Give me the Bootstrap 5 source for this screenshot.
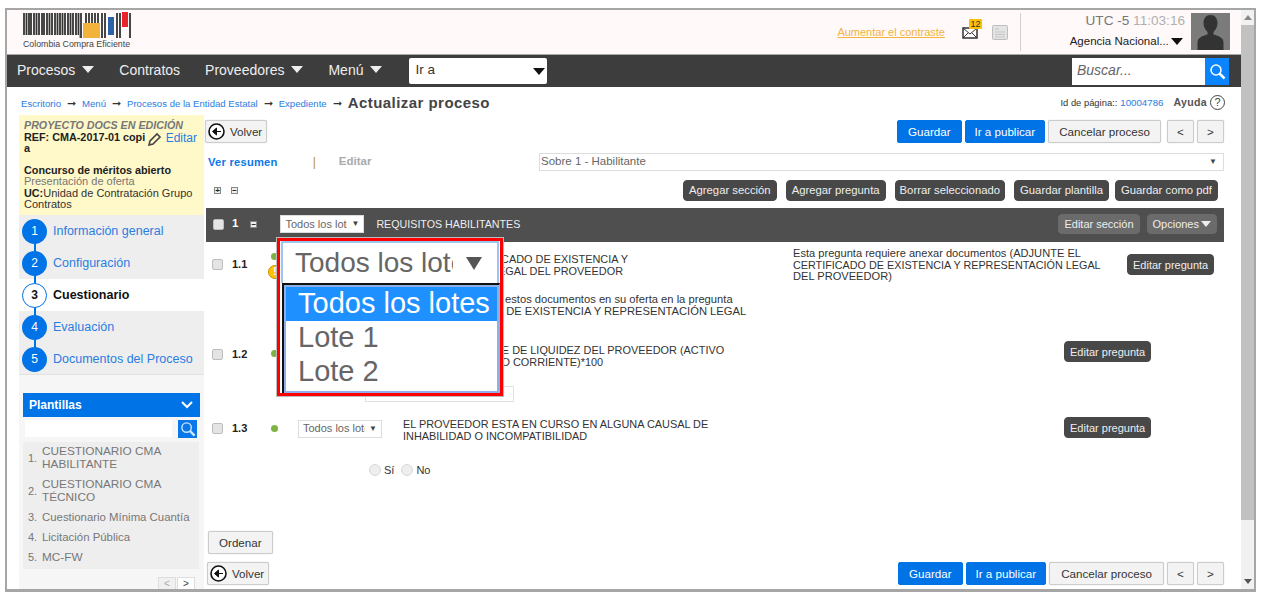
<!DOCTYPE html>
<html lang="es">
<head>
<meta charset="utf-8">
<title>Actualizar proceso</title>
<link href="https://cdn.jsdelivr.net/npm/bootstrap@5.3.0/dist/css/bootstrap.min.css" rel="stylesheet">
<style>
html,body{height:100%;overflow:hidden;background:#fff}
body{font-family:"Liberation Sans",Arial,sans-serif;font-size:12px;color:#333;padding:8px 6px 5px 5px}
.frame{height:584px;border:solid #a6a6a6;border-width:2px 2px 3px 2px;display:flex;overflow:hidden;background:#fff}
.page{width:1234px;flex:none;display:flex;flex-direction:column}
.sbar{flex:1;background:#f1f1f1;display:flex;flex-direction:column;align-items:center}
.sb-up,.sb-dn{height:15px;display:flex;align-items:center;color:#777}
.sb-thumb{height:495px;width:100%;background:#c1c1c1}
.tri{width:0;height:0;border-left:4px solid transparent;border-right:4px solid transparent}
.tri-u{border-bottom:5px solid #888}
.tri-d{border-top:5px solid #555}
.head{height:45px;background:#fff9f9;border-bottom:1px solid #a9a9a9;display:flex;align-items:stretch;padding:3px 11px 0 16px}
.logo{margin-top:-1px;flex:none}
.logo-txt{font-size:8.8px;fill:#444;font-family:"Liberation Sans",Arial,sans-serif}
.contrast{color:#f4b23e;font-size:11px;text-decoration:underline;margin-right:17px;margin-top:11px}
.ico-mail{position:relative;width:22px;height:22px;margin-top:6px}
.mailsvg{position:absolute;left:0;top:8px}
.ico-badge{position:absolute;left:7px;top:0;width:13px;height:10px;background:#fdc100;font-size:9px;line-height:10px;color:#333;text-align:center;border-radius:1px}
.docsvg{margin:12px 0 0 8px}
.hdiv{width:1px;background:#d0d0d0;margin:0 0 3px 12px}
.hinfo{width:170px;text-align:right;padding-right:6px;flex:none}
.clock{font-size:13.6px;color:#777;line-height:16px}
.clock span{color:#b0b0b0}
.agency{font-size:11.5px;color:#222;margin-top:5px;line-height:14px;padding-right:2px}
.crt-b{display:inline-block;width:0;height:0;border-left:6px solid transparent;border-right:6px solid transparent;border-top:7px solid #111;margin-left:1px}
.agency .crt-b{margin-left:-1px}
.crt-w{display:inline-block;width:0;height:0;border-left:6px solid transparent;border-right:6px solid transparent;border-top:7px solid #eee;margin-left:7px;vertical-align:2px}
.avatar{width:39px;height:37px;background:#7b7b7b;flex:none}
.mainnav{height:32px;background:#3d3d3d;display:flex;align-items:center;padding:0 12px 0 10px;flex:none}
.nv{color:#eee;font-size:14px;margin-right:25px;white-space:nowrap;padding-bottom:2px}
.nv-go{width:138px;height:26px;background:#fff;border-radius:2px;margin-left:2px;color:#333;font-size:13.5px;display:flex;align-items:center;justify-content:space-between;padding:0 2px 2px 6px}
.nv-go .crt-b{margin-top:3px}
.nv-search{margin-left:auto;display:flex;height:27px;width:157px}
.nv-in{flex:1;background:#fff;color:#666;font-style:italic;font-size:14px;padding:2px 5px}
.nv-btn{width:24px;background:#0a84ff;display:flex;align-items:center;justify-content:center}
.crumb{height:28px;flex:none;display:flex;align-items:center;padding:4px 16px 0 14px}
.crumb a{font-size:9.6px;color:#2a7de1;text-decoration:none;padding-top:2px}
.arr{font-size:11px;color:#333;margin:0 6px;line-height:1}
.crumb-now{font-size:15px;font-weight:700;color:#444;letter-spacing:.03em}
.pageid{margin-left:auto;font-size:9.4px;color:#333;display:flex;align-items:center}
.pageid a{color:#2a7de1;margin-left:3px;font-size:9.7px;padding-top:0}
.pageid b{font-size:10.6px;color:#555;margin-left:10px;letter-spacing:.03em}
.qm{width:15px;height:15px;border:1.5px solid #444;border-radius:50%;font-size:11px;line-height:12px;text-align:center;margin-left:3px;color:#444}
.body-wrap{flex:1;display:flex;min-height:0;padding-left:12px}
.side{width:185px;flex:none;background:#f6f6f6;display:flex;flex-direction:column}
.yell{height:100px;background:#fff8c9;padding:5px 7px 4px 5px;line-height:11.5px;font-size:11px;flex:none}
.yell i{color:#777;font-weight:700;font-size:10.7px}
.yell b{color:#222;font-size:10.8px}
.yell .gr{color:#777}
.ed{color:#2a7de1;font-size:12px;white-space:nowrap}
.ref{display:flex;justify-content:space-between}
.ygap{height:10px}
.steps{background:#eee;flex:none;height:160px;border-bottom:1px solid #e2e2e2}
.stp{height:32px;display:flex;align-items:center;padding-left:3px;position:relative;font-size:12.5px;color:#2a7de1}
.stp.on{background:#fff;color:#111;font-weight:700}
.stp+.stp::before{content:"";position:absolute;left:15px;top:-6px;width:1.5px;height:12px;background:#0073e6}
.dotn{width:25px;height:25px;border-radius:50%;background:#0073e6;color:#fff;display:flex;align-items:center;justify-content:center;margin-right:6px;font-size:12px;position:relative;z-index:1;font-weight:400}
.on .dotn{background:#fff;border:1.5px solid #0073e6;color:#111;font-weight:700}
.plant{margin:18px 4px 0 4px;height:24px;background:#0073e6;color:#fff;font-weight:700;display:flex;align-items:center;justify-content:space-between;padding:0 7px 0 6px;font-size:12px;flex:none}
.psearch{display:flex;justify-content:space-between;padding:3px 7px 0 6px;flex:none}
.psearch span{width:147px;height:17px;background:#fff;display:block}
.psearch em{width:19px;height:18px;background:#0a78e8;display:flex;align-items:center;justify-content:center}
.plist{margin:4px 0 0 4px;width:176px;background:#eee;color:#777;padding:0 0 1px 5px;font-size:11.8px;line-height:13px;flex:none;list-style:none}
.plist li{display:flex;align-items:center;padding:3px 0 4px}
.plist u{text-decoration:none;width:14px;flex:none;font-size:11px}
.plist .lw{font-size:11.4px}
.ppg{display:flex;justify-content:flex-end;gap:1px;padding:8px 9px 0 0;flex:none}
.ppg span{width:18px;height:14px;border:1px solid #ddd;background:#fff;font-size:10px;text-align:center;line-height:12px;color:#444}
.ppg span:first-child{background:#f0f0f0;color:#aaa}
.cnt{flex:1;min-width:0;display:flex;flex-direction:column;padding:0 17px 0 1px;position:relative}
.tbar{display:flex;align-items:center;justify-content:space-between;flex:none}
.tbar.first{margin-top:5px}
.btn.b-g{background:#f3f3f3;border:1px solid #ccc;color:#333;font-size:11.6px;padding:0 10px;height:23px;line-height:20px;border-radius:2px;box-shadow:0 0 1px #bbb}
.btn.b-p{background:#0073e6;border:1px solid #0073e6;color:#fff;font-size:11.6px;padding:0 10px;height:23px;line-height:20px;border-radius:2px}
.btn.b-p.pub{padding:0 9px}
.btn.b-g.wide{padding:0 11px}
.btn.b-d{background:#484848;border:1px solid #484848;color:#eee;font-size:11.3px;padding:0 5px;height:21px;line-height:18px;border-radius:4px;white-space:nowrap}
.btn.b-d.narrow{padding:0 4px}
.btn.b-m{background:#6b6b6b;border:1px solid #6b6b6b;color:#eee;font-size:11px;padding:0 5px;height:20px;line-height:17px;border-radius:4px;display:flex;align-items:center}
.opc-crt{display:inline-block;width:0;height:0;border-left:5px solid transparent;border-right:5px solid transparent;border-top:6px solid #eee;margin-left:2px}
.btn.volver{display:inline-flex;align-items:center;gap:5px;padding:0 4px 0 2px}
.btn.volver.low{margin-left:2px}
.grp{display:flex;gap:3px}
.first .grp .fix{margin-left:3px}
.btn.wsm{width:27px;padding:0}
.tbar2{margin-top:10px;height:18px;display:flex;align-items:center;flex:none;padding-left:3px}
.tbar2 a{color:#0a78e8;font-weight:700;font-size:11.2px;text-decoration:none;letter-spacing:.02em}
.sep{color:#b8960a;margin-left:35px;font-size:12px}
.off{color:#aaa;font-weight:700;font-size:11.5px;margin-left:23px}
.sobre{margin-left:auto;width:685px;height:18px;border:1px solid #ddd;background:#fff;color:#666;font-size:11.5px;display:flex;align-items:center;justify-content:space-between;padding:0 6px 0 1px}
.tbar3{height:24px;margin-top:7px;display:flex;align-items:center;flex:none;padding-left:9px;padding-right:6px}
.pm{width:7px;height:7px;border:1px solid #888;font-size:8px;line-height:5px;text-align:center;color:#222;background:#eee;margin-right:10px;flex:none;font-weight:700}
.acts{margin-left:auto;display:flex;align-items:center}
.acts .btn+.btn{margin-left:9px}
.acts .btn.tight{margin-left:6px}
.sec{height:34px;background:#4f4f4f;margin:6px 0 0 1px;display:flex;align-items:center;flex:none;padding:0 0 2px 7px;color:#fff;font-weight:700;font-size:11.5px}
.cb{width:11px;height:11px;background:#e4e4e4;border:1px solid #bdbdbd;border-radius:2px;flex:none;display:block}
.secnum{margin-left:8px}
.secpm{margin:0 23px 0 12px}
.mini{width:84px;height:18px;background:#fff;border:1px solid #ddd;color:#666;font-size:11px;font-weight:400;display:flex;align-items:center;justify-content:space-between;padding:0 4px;white-space:nowrap;overflow:hidden;flex:none}
.mini s{text-decoration:none;width:62px;overflow:hidden;display:block}
.mtri{font-size:8px;color:#444}
.sect{font-weight:400;color:#eee;font-size:10.7px;margin-left:12px}
.sec-r{margin-left:auto;display:flex;gap:7px;padding-right:7px}
.qrow{display:flex;flex:none;padding-left:7px;color:#333;font-size:10.9px;line-height:11.7px}
.qrow .btn.b-d{font-size:11px}
.qa{height:89px;padding-top:6px}
.qb{height:75px;padding-top:7px}
.qc{height:76px;padding-top:14px}
.qk{width:20px;flex:none;padding-top:11px}
.qn{width:38px;flex:none;font-weight:700;font-size:11px;color:#222;padding-top:11px}
.qc .qk,.qc .qn{padding-top:3px}
.qd{width:28px;flex:none;padding-left:1px;padding-top:3px;position:relative}
.qb .qd{padding-top:10px}
.qc .qd{padding-top:3px}
.gdot{display:block;width:7px;height:7px;border-radius:50%;background:#7cb342;margin-top:2px}
.wdot{display:block;width:14px;height:14px;border-radius:50%;background:#ffc400;border:1px solid #c09000;margin:5px 0 0 -3px;font-style:normal;color:#fff;font-size:10px;font-weight:700;line-height:12px;text-align:center}
.qs{width:105px;flex:none}
.qt{width:390px;flex:none;padding-top:6px}
.qt p{margin:0 0 17px}
.qt p.lc{font-size:11.2px}
.squeeze{letter-spacing:-.9px}
.qx{width:334px;flex:none;padding-right:18px;font-size:11.1px}
.qx span{font-size:10.8px}
.qw{width:661px;flex:none}
.qb .qw{padding-top:7px}
.qc .qw{margin-top:-1px}
.qinp{width:149px;height:16px;border:1px solid #e2e2e2;margin:18px 0 0 -38px}
.rad{margin:23px 0 0 -34px;display:flex;align-items:center;font-size:11px;gap:3px}
.rd{width:12px;height:12px;border-radius:50%;background:#eee;border:1px solid #d8d8d8;margin-top:-3px}
.rad .rd+span{margin-right:4px}
.btn.qbtn1{align-self:flex-start;margin-top:6px}
.btn.qbtn2{align-self:flex-start;margin-top:3px}
.btn.qbtn3{align-self:flex-start;margin-top:-3px}
.grow{flex:1}
.ordwrap{flex:none;padding:0 0 8px 3px}
.popup{position:absolute;left:73px;top:123px;width:226px;height:158px;border:3px solid #f00;background:#fff;outline:1px solid #bbb;z-index:5;display:flex;flex-direction:column;color:#666}
.pop-top{height:42px;flex:none;border:solid #9ec4f2;border-width:2px 2px 0 2px;display:flex;align-items:center;font-size:28px;padding-left:12px;margin:0 1px;white-space:nowrap}
.pop-top s{text-decoration:none;width:158px;overflow:hidden;display:block;color:#666}
.pop-top .bt{width:0;height:0;border-left:8px solid transparent;border-right:8px solid transparent;border-top:13px solid #555;margin-left:13px}
.pop-list{flex:1;border:solid #111;border-width:2px 0 0 2px;margin:0 0 0 2px;box-shadow:inset 0 0 0 2px #8fb0e6;padding:2px;font-size:29px;line-height:32px;border-right:1px solid #8fb0e6}
.opt{height:34px;padding-left:12px;white-space:nowrap}
.opt.sel{background:#1e90ff;color:#fff}
</style>
</head>
<body>
<div class="frame">
<div class="page">
  <header class="head">
    <svg width="110" height="40" viewBox="0 0 110 40" class="logo" aria-label="Logo">
      <path d="M1 1v25M3.500 1v25M6 1v25M8 1v25M11 1v25M13.500 1v25M16 1v25M19 1v25M21 1v25M24 1v25M26.500 1v25M29 1v25M32 1v25M34.500 1v25M37 1v25M39.500 1v25M42 1v25M45 1v25M47.500 1v25M50 1v25M53 1v25M55.500 1v25M58 1v25M63 1v10M66 1v10M69 1v10M72 1v10M75 1v10M79 1v25M82 1v25M94 1v25M97 1v25M107 1v25" stroke="#333" stroke-width="1.800" fill="none"/>
      <rect x="0" y="23" width="56" height="4" fill="#fff9f9"/>
      <rect x="60" y="11" width="17" height="15" fill="#f2b33d"/>
      <rect x="85" y="5" width="6" height="18" fill="#2b62a8"/>
      <rect x="99" y="0" width="6" height="15" fill="#e8232a"/>
      <text x="0" y="35" class="logo-txt">Colombia Compra Eficiente</text>
    </svg>
    <div class="ms-auto d-flex align-items-start">
      <a class="contrast" href="#">Aumentar el contraste</a>
      <div class="ico-mail">
        <svg width="16" height="12" viewBox="0 0 16 12" class="mailsvg"><rect x="1" y="1" width="14" height="10" fill="#fff" stroke="#333" stroke-width="1.500"/><path d="M1 1l7 6 7-6M1 11l5-5M15 11l-5-5" stroke="#333" fill="none"/></svg>
        <span class="ico-badge">12</span>
      </div>
      <svg width="16" height="15" viewBox="0 0 16 15" class="docsvg"><rect x=".5" y=".5" width="15" height="14" rx="1" fill="#e4e4e4" stroke="#bdbdbd"/><path d="M3 4h4M3 7h10M3 9.500h10M3 12h10" stroke="#c4c4c4"/></svg>
    </div>
    <div class="hdiv"></div>
    <div class="hinfo">
      <div class="clock">UTC -5 <span>11:03:16</span></div>
      <div class="agency">Agencia Nacional... <i class="crt-b"></i></div>
    </div>
    <div class="avatar">
      <svg width="39" height="37" viewBox="0 0 39 37"><path d="M19.500 2c-4.500 0-7 3.500-7 8 0 4 2 7 4 9v2.500c-5 1.500-10 3-10 8V37h26v-7.500c0-5-5-6.500-10-8V19c2-2 4-5 4-9 0-4.500-2.500-8-7-8z" fill="#333"/></svg>
    </div>
  </header>

  <nav class="mainnav">
    <span class="nv">Procesos<i class="crt-w"></i></span>
    <span class="nv">Contratos</span>
    <span class="nv">Proveedores<i class="crt-w"></i></span>
    <span class="nv">Menú<i class="crt-w"></i></span>
    <div class="nv-go"><span>Ir a</span><i class="crt-b"></i></div>
    <div class="nv-search">
      <div class="nv-in">Buscar...</div>
      <div class="nv-btn"><svg width="17" height="17" viewBox="0 0 17 17"><circle cx="7" cy="7" r="5" fill="none" stroke="#fff" stroke-width="1.500"/><path d="M10.500 10.500l5 5" stroke="#fff" stroke-width="2.500"/></svg></div>
    </div>
  </nav>

  <div class="crumb">
    <a href="#">Escritorio</a><span class="arr">➞</span><a href="#">Menú</a><span class="arr">➞</span><a href="#">Procesos de la Entidad Estatal</a><span class="arr">➞</span><a href="#">Expediente</a><span class="arr">➞</span><span class="crumb-now">Actualizar proceso</span>
    <div class="pageid">Id de página:: <a href="#">10004786</a><b>Ayuda</b><span class="qm">?</span></div>
  </div>

  <div class="body-wrap">
    <aside class="side">
      <div class="yell">
        <i>PROYECTO DOCS EN EDICIÓN</i>
        <div class="ref"><b>REF: CMA-2017-01 copi<br>a</b><span class="ed"><svg width="14" height="14" viewBox="0 0 14 14"><path d="M1 13l1-4 7-7 3 3-7 7zM9 2l3 3" fill="none" stroke="#444" stroke-width="1.600"/></svg> Editar</span></div>
        <div class="ygap"></div>
        <b>Concurso de méritos abierto</b><br>
        <span class="gr">Presentación de oferta</span><br>
        <b>UC:</b>Unidad de Contratación Grupo Contratos
      </div>
      <div class="steps">
        <div class="stp"><span class="dotn">1</span>Información general</div>
        <div class="stp"><span class="dotn">2</span>Configuración</div>
        <div class="stp on"><span class="dotn">3</span>Cuestionario</div>
        <div class="stp"><span class="dotn">4</span>Evaluación</div>
        <div class="stp"><span class="dotn">5</span>Documentos del Proceso</div>
      </div>
      <div class="plant"><span>Plantillas</span><svg width="12" height="8" viewBox="0 0 12 8"><path d="M1 1l5 5 5-5" fill="none" stroke="#fff" stroke-width="2"/></svg></div>
      <div class="psearch"><span></span><em><svg width="16" height="16" viewBox="0 0 17 17"><circle cx="7" cy="7" r="5" fill="none" stroke="#cfe6ff" stroke-width="1.500"/><path d="M10.500 10.500l5 5" stroke="#cfe6ff" stroke-width="2.500"/></svg></em></div>
      <ul class="plist">
        <li><u>1.</u><span>CUESTIONARIO CMA HABILITANTE</span></li>
        <li><u>2.</u><span>CUESTIONARIO CMA TÉCNICO</span></li>
        <li><u>3.</u><span class="lw">Cuestionario Mínima Cuantía</span></li>
        <li><u>4.</u><span class="lw">Licitación Pública</span></li>
        <li><u>5.</u><span>MC-FW</span></li>
      </ul>
      <div class="ppg"><span>&lt;</span><span>&gt;</span></div>
    </aside>

    <main class="cnt">
      <div class="tbar first">
        <button class="btn b-g volver"><svg width="17" height="17" viewBox="0 0 17 17"><circle cx="8.500" cy="8.500" r="7.500" fill="#fff" stroke="#111" stroke-width="1.600"/><path d="M13 8.500H8M8.500 5l-4 3.500 4 3.500z" stroke="#111" fill="#111"/></svg>Volver</button>
        <div class="grp">
          <button class="btn b-p">Guardar</button><button class="btn b-p pub">Ir a publicar</button><button class="btn b-g">Cancelar proceso</button><button class="btn b-g wsm fix">&lt;</button><button class="btn b-g wsm">&gt;</button>
        </div>
      </div>
      <div class="tbar2">
        <a href="#">Ver resumen</a><span class="sep">|</span><span class="off">Editar</span>
        <div class="sobre"><span>Sobre 1 - Habilitante</span><span class="mtri">▼</span></div>
      </div>
      <div class="tbar3">
        <span class="pm">+</span><span class="pm">−</span>
        <div class="acts">
          <button class="btn b-d">Agregar sección</button><button class="btn b-d">Agregar pregunta</button><button class="btn b-d narrow">Borrar seleccionado</button><button class="btn b-d">Guardar plantilla</button><button class="btn b-d tight">Guardar como pdf</button>
        </div>
      </div>
      <div class="sec">
        <span class="cb"></span><span class="secnum">1</span>
        <span class="pm secpm">−</span>
        <div class="mini"><s>Todos los lotes</s><span class="mtri">▼</span></div>
        <span class="sect">REQUISITOS HABILITANTES</span>
        <div class="sec-r"><button class="btn b-m">Editar sección</button><button class="btn b-m">Opciones<i class="opc-crt"></i></button></div>
      </div>

      <div class="qrow qa">
        <div class="qk"><span class="cb"></span></div><div class="qn">1.1</div>
        <div class="qd"><span class="gdot"></span><i class="wdot">!</i></div><div class="qs"></div>
        <div class="qt"><p>ANEXE EL CERTIFICADO DE EXISTENCIA Y<br><span class="squeeze">REPRESENTACIÓN L</span>EGAL DEL PROVEEDOR</p><p class="lc">Recuerde presentar estos documentos en su oferta en la pregunta<br>DEL CERTIFICADO DE EXISTENCIA Y REPRESENTACIÓN LEGAL</p></div>
        <div class="qx">Esta pregunta requiere anexar documentos (ADJUNTE EL <span>CERTIFICADO DE EXISTENCIA Y REPRESENTACIÓN LEGAL</span> DEL PROVEEDOR)</div>
        <button class="btn b-d qbtn1">Editar pregunta</button>
      </div>
      <div class="qrow qb">
        <div class="qk"><span class="cb"></span></div><div class="qn">1.2</div>
        <div class="qd"><span class="gdot"></span></div><div class="qs"></div>
        <div class="qw">CALCULE EL INDICE DE LIQUIDEZ DEL PROVEEDOR (ACTIVO<br>CORRIENTE/PASIVO CORRIENTE)*100<div class="qinp"></div></div>
        <button class="btn b-d qbtn2">Editar pregunta</button>
      </div>
      <div class="qrow qc">
        <div class="qk"><span class="cb"></span></div><div class="qn">1.3</div>
        <div class="qd"><span class="gdot"></span></div>
        <div class="qs"><div class="mini"><s>Todos los lotes</s><span class="mtri">▼</span></div></div>
        <div class="qw">EL PROVEEDOR ESTA EN CURSO EN ALGUNA CAUSAL DE<br>INHABILIDAD O INCOMPATIBILIDAD<div class="rad"><span class="rd"></span><span>Sí</span><span class="rd"></span><span>No</span></div></div>
        <button class="btn b-d qbtn3">Editar pregunta</button>
      </div>
      <div class="grow"></div>
      <div class="ordwrap"><button class="btn b-g">Ordenar</button></div>
      <div class="tbar pb-1">
        <button class="btn b-g volver low"><svg width="17" height="17" viewBox="0 0 17 17"><circle cx="8.500" cy="8.500" r="7.500" fill="#fff" stroke="#111" stroke-width="1.600"/><path d="M13 8.500H8M8.500 5l-4 3.500 4 3.500z" stroke="#111" fill="#111"/></svg>Volver</button>
        <div class="grp">
          <button class="btn b-p">Guardar</button><button class="btn b-p pub">Ir a publicar</button><button class="btn b-g wide">Cancelar proceso</button><button class="btn b-g wsm">&lt;</button><button class="btn b-g wsm">&gt;</button>
        </div>
      </div>

      <div class="popup">
        <div class="pop-top"><s>Todos los lotes</s><i class="bt"></i></div>
        <div class="pop-list">
          <div class="opt sel">Todos los lotes</div>
          <div class="opt">Lote 1</div>
          <div class="opt">Lote 2</div>
        </div>
      </div>
    </main>
  </div>
</div>
<div class="sbar"><div class="sb-up"><i class="tri tri-u"></i></div><div class="sb-thumb"></div><div class="grow"></div><div class="sb-dn"><i class="tri tri-d"></i></div></div>
</div>
<script src="https://cdn.jsdelivr.net/npm/bootstrap@5.3.0/dist/js/bootstrap.bundle.min.js"></script>
</body>
</html>
